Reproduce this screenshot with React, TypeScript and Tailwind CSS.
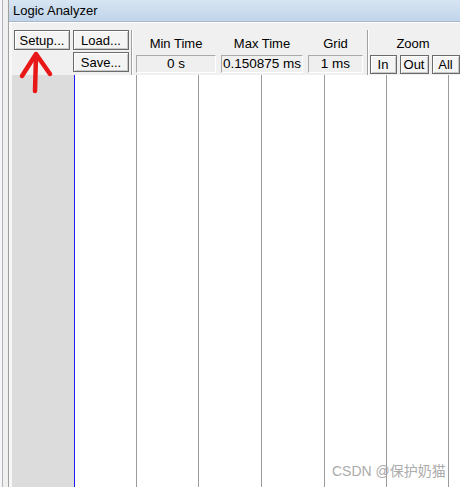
import React from "react";

const font = { fontFamily: '"Liberation Sans", Arial, sans-serif' };

function Btn({ children, w, h = "h-[20px]" }: { children: React.ReactNode; w: string; h?: string }) {
  return (
    <div
      className={`${w} ${h} flex items-center justify-center border border-[#6b6b6b] bg-[#f4f4f4] shadow-[inset_1px_1px_0_#ffffff,inset_-1px_-1px_0_#c8c8c8] text-[13px] text-black leading-none`}
    >
      {children}
    </div>
  );
}

function Field({ children, w, align = "justify-center" }: { children: React.ReactNode; w: string; align?: string }) {
  return (
    <div
      className={`${w} h-[18px] flex items-center ${align} bg-[#efefef] border-t border-l border-[#a9a9a9] border-r border-b border-r-white border-b-white text-[13.5px] text-black leading-none`}
    >
      {children}
    </div>
  );
}

export default function App() {
  const cells = [62, 62, 63, 63, 62, 62];
  return (
    <div className="relative w-[460px] h-[487px] bg-[#f0f0f0] overflow-hidden" style={font}>
      <div className="flex h-full">
        <div className="w-[9px] h-full flex">
          <div className="w-[2px] bg-[#f4f6f9]" />
          <div className="w-[1px] bg-[#b4b4b4]" />
          <div className="w-[5px] bg-[#f0f0f0]" />
          <div className="w-[1px] bg-[#a0a0a0]" />
        </div>
        <div className="flex-1 flex flex-col">
          <div className="h-[22px] bg-gradient-to-b from-[#d7e5f3] to-[#c0d4ea] border-b border-[#a6b8cc] flex items-center pl-[4px] text-[13px] text-black">
            Logic Analyzer
          </div>
          <div className="h-[53px] flex border-t border-[#ffffff]">
            <div className="w-[3px] bg-[#f7f7f7]" />
            <div className="flex-1 flex pt-[7px]">
              <div className="w-[120px] flex gap-[3px] pl-[2px] border-r border-[#a0a0a0] shadow-[1px_0_0_#ffffff]">
                <Btn w="w-[56px]">Setup...</Btn>
                <div className="flex flex-col gap-[2px]">
                  <Btn w="w-[56px]">Load...</Btn>
                  <Btn w="w-[56px]">Save...</Btn>
                </div>
              </div>
              <div className="w-[236px] flex gap-[5px] pl-[4px] pt-[7px] border-r border-[#a0a0a0] shadow-[1px_0_0_#ffffff]">
                <div className="flex flex-col items-center gap-[4px]">
                  <div className="text-[13px] leading-[14px]">Min Time</div>
                  <Field w="w-[80px]">0 s</Field>
                </div>
                <div className="flex flex-col items-center gap-[4px]">
                  <div className="text-[13px] leading-[14px]">Max Time</div>
                  <Field w="w-[82px]" align="justify-start pl-[1px]">0.150875 ms</Field>
                </div>
                <div className="flex flex-col items-center gap-[4px]">
                  <div className="text-[13px] leading-[14px]">Grid</div>
                  <Field w="w-[55px]">1 ms</Field>
                </div>
              </div>
              <div className="flex-1 flex flex-col items-center pt-[7px] gap-[4px]">
                <div className="text-[13px] leading-[14px] pr-[2px]">Zoom</div>
                <div className="flex gap-[3px] pl-[1px]">
                  <Btn w="w-[27px]" h="h-[19px]">In</Btn>
                  <Btn w="w-[29px]" h="h-[19px]">Out</Btn>
                  <Btn w="w-[28px]" h="h-[19px]">All</Btn>
                </div>
              </div>
            </div>
          </div>
          <div className="flex-1 flex">
            <div className="w-[3px] bg-[#f7f7f7]" />
            <div className="w-[62px] bg-[#dcdcdc]" />
            <div className="w-[1px] bg-[#1a1aff]" />
            <div className="flex-1 flex bg-white">
              {cells.map((w, i) => (
                <div key={i} className="h-full border-r border-[#9c9c9c]" style={{ width: w }} />
              ))}
            </div>
          </div>
        </div>
      </div>
      <svg className="absolute left-0 top-0" width="70" height="100" viewBox="0 0 70 100">
        <path d="M35 91 L36 56" stroke="#e81818" strokeWidth="4.5" strokeLinecap="round" fill="none" />
        <path d="M22 76 L36 54 L50 74" stroke="#e81818" strokeWidth="4.5" strokeLinecap="round" strokeLinejoin="round" fill="none" />
      </svg>
      <div
        className="absolute left-[332px] top-[464px] text-[14px] text-[#ababab] leading-none whitespace-nowrap"
        style={{ fontFamily: '"Liberation Sans", "Noto Sans CJK SC", sans-serif' }}
      >
        CSDN @保护奶猫
      </div>
    </div>
  );
}
